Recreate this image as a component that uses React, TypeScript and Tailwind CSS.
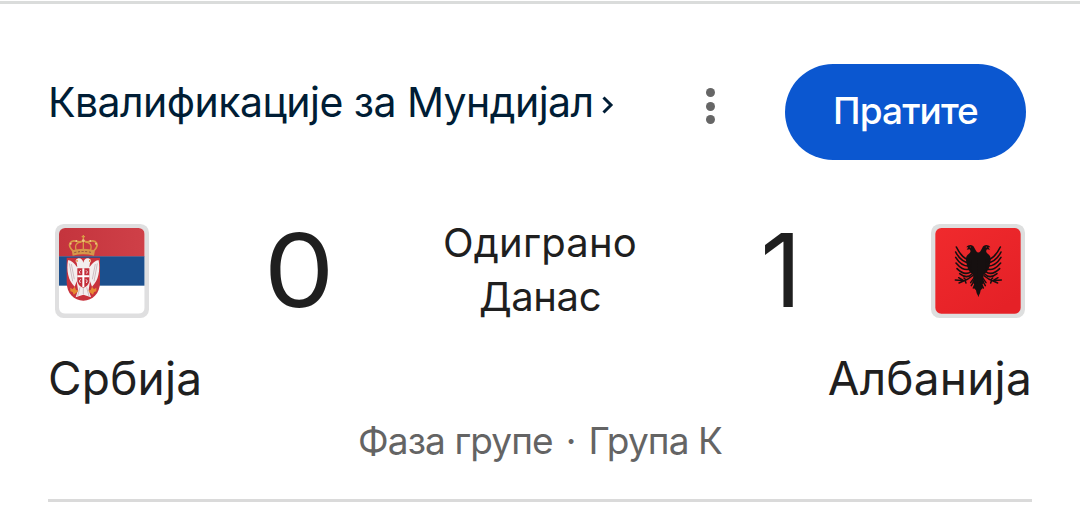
import type { ReactNode } from 'react'

const feathers = [
  'M152 152 C134 148 118 130 109 111',
  'M152 160 C130 158 116 144 107 126',
  'M152 168 C130 171 117 158 107 142',
  'M152 176 C132 184 120 173 108 159',
  'M154 184 C138 197 124 189 111 176',
  'M156 192 C144 205 130 200 119 191',
]

function SerbiaFlag() {
  return (
    <svg className="size-[94px] shrink-0" viewBox="45 42 282 282" aria-label="Србија">
      <defs>
        <clipPath id="serbia">
          <rect x="57" y="54" width="257" height="257" rx="18" />
        </clipPath>
        <linearGradient id="red" x1="0" y1="0" x2="1" y2="0">
          <stop offset="0" stopColor="#c4343d" />
          <stop offset="1" stopColor="#cf4048" />
        </linearGradient>
      </defs>
      <rect x="45" y="42" width="282" height="282" rx="26" fill="#dfdfe0" />
      <g clipPath="url(#serbia)">
        <rect x="57" y="54" width="257" height="257" fill="#fff" />
        <rect x="57" y="54" width="257" height="86" fill="url(#red)" />
        <rect x="57" y="139" width="257" height="88" fill="#1b4f8d" />
      </g>
      {/* shield */}
      <path d="M80 143 H180 V216 C180 250 158 272 130 272 C102 272 80 250 80 216 Z" fill="#c8323c" />
      {/* eagle */}
      <g fill="#f3eeee">
        <path d="M112 146 C121 142 128 148 130 158 C132 148 139 142 148 146 C154 149 155 154 150 158 L148 172 C158 158 170 148 176 151 C181 180 176 212 156 230 L150 214 L146 240 L153 262 L130 254 L107 262 L114 240 L110 214 L104 230 C84 212 79 180 84 151 C90 148 102 158 112 172 L110 158 C105 154 106 149 112 146 Z" />
      </g>
      <g stroke="#b9a3ab" strokeWidth="2" fill="none">
        <path d="M88 160 L98 214 M94 162 L103 208 M172 160 L162 214 M166 162 L157 208" />
        <path d="M120 232 L113 258 M130 232 V252 M140 232 L147 258" />
      </g>
      <path d="M112 175 H148 V214 Q146 228 130 234 Q114 228 112 214 Z" fill="#c42e3a" />
      <path d="M127 175 H133 V232 H127 Z M112 196 H148 V202 H112 Z" fill="#fff" />
      <g fill="none" stroke="#f3e4e4" strokeWidth="3">
        <path d="M122 181 Q115 184 120 191 M138 181 Q145 184 140 191 M122 208 Q115 212 121 219 M138 208 Q145 212 139 219" />
      </g>
      <g fill="#e58a32">
        <path d="M91 233 L98 238 L104 230 L108 240 L116 242 L107 250 L101 254 L98 246 L91 244 Z" />
        <path d="M169 233 L162 238 L156 230 L152 240 L144 242 L153 250 L159 254 L162 246 L169 244 Z" />
        <path d="M113 149 L106 153 L113 156 Z M147 149 L154 153 L147 156 Z" />
      </g>
      {/* crown */}
      <g fill="none" stroke="#d99a45" strokeWidth="5">
        <path d="M98 122 C80 104 92 88 110 94 C120 97 126 94 130 91 C134 94 140 97 150 94 C168 88 180 104 162 122" />
        <path d="M109 122 C102 104 112 97 124 96 M151 122 C158 104 148 97 136 96 M130 92 V120" strokeWidth="4" />
        <path d="M130 75 V90 M125 80 H135" strokeWidth="4" />
      </g>
      <path d="M95 121 Q130 112 165 121 L162 137 Q130 129 98 137 Z" fill="#d6974b" />
      <path d="M103 128 Q130 121 157 128" fill="none" stroke="#8f4c3e" strokeWidth="3" strokeDasharray="6 5" />
      <g fill="#edc383">
        <circle cx="92" cy="101" r="3" />
        <circle cx="109" cy="93" r="3" />
        <circle cx="151" cy="93" r="3" />
        <circle cx="168" cy="101" r="3" />
        <circle cx="130" cy="92" r="4" />
      </g>
    </svg>
  )
}

// One half of the eagle, the other is the same path mirrored at x = 175
function EagleHalf() {
  return (
    <g>
      <path
        d="M176 128 C170 127 167 121 163 113 C159 103 145 103 139 112 L145 112 L140 119 L149 118 C154 124 151 129 145 133 C137 138 136 150 141 166 C144 180 151 188 159 194 L161 208 L157 216 L164 224 L161 233 L168 241 L170 250 L176 261 Z"
        fill="#161010"
      />
      <g fill="none" stroke="#161010" strokeWidth="4.8" strokeLinecap="round">
        {feathers.map((d) => (
          <path key={d} d={d} />
        ))}
      </g>
      <g fill="none" stroke="#161010" strokeWidth="4.5" strokeLinecap="round" strokeLinejoin="round">
        <path d="M158 197 L144 207 L134 212 L106 210 M134 212 L117 219 M130 211 L116 203 M137 209 L132 204 M135 211 L138 219" />
        <path d="M163 202 L152 218 M165 208 L154 227 M168 216 L160 234" />
      </g>
      <circle cx="151" cy="111" r="1.8" fill="#e5252a" />
    </g>
  )
}

function AlbaniaFlag() {
  return (
    <svg className="size-[94px] shrink-0" viewBox="33 42 282 282" aria-label="Албанија">
      <defs>
        <linearGradient id="albania" x1="0" y1="0" x2="0.7" y2="1">
          <stop offset="0" stopColor="#f02a2d" />
          <stop offset="1" stopColor="#e52127" />
        </linearGradient>
      </defs>
      <rect x="33" y="42" width="282" height="282" rx="26" fill="#dedfdf" />
      <rect x="46" y="54" width="256" height="257" rx="18" fill="url(#albania)" />
      <EagleHalf />
      <g transform="translate(350 0) scale(-1 1)">
        <EagleHalf />
      </g>
    </svg>
  )
}

function Score({ children }: { children: ReactNode }) {
  return <span className="-mt-0.5 text-center text-[102px] leading-[94px]">{children}</span>
}

export default function App() {
  return (
    <div
      lang="sr"
      className="flex h-[507px] w-[1080px] flex-col overflow-hidden bg-white pt-px font-['Inter','Open_Sans',sans-serif] text-[#1f1f1f]"
    >
      <div className="h-[3px] shrink-0 bg-[#dadcdb]" />

      {/* Header */}
      <header className="mt-[60px] flex h-24 shrink-0 items-center pr-[54px] pl-12">
        <a className="-mt-5 flex items-center whitespace-nowrap text-[#001d35]">
          <span className="text-[41px] leading-[48px] tracking-[-0.55px]">Квалификације за Мундијал</span>
          <svg className="mt-1.5 ml-2 h-[20px] w-[12px]" viewBox="0 0 12 20" fill="none" stroke="currentColor" strokeWidth="3">
            <path d="M1.5 2.5 L9 10 L1.5 17.5" />
          </svg>
        </a>
        <div className="-mt-3 mr-[70.5px] ml-auto flex flex-col gap-[4.5px]">
          <i className="size-[9px] rounded-full bg-[#666]" />
          <i className="size-[9px] rounded-full bg-[#666]" />
          <i className="size-[9px] rounded-full bg-[#666]" />
        </div>
        <button className="h-24 w-[241px] rounded-full bg-[#0b57d0] pb-[3px] text-[37px] font-medium tracking-[-0.9px] text-white">
          Пратите
        </button>
      </header>

      {/* Score */}
      <div className="mt-16 grid h-[94px] shrink-0 grid-cols-[94px_300px_182px_300px_94px] grid-rows-[94px] items-center pl-[55px]">
        <SerbiaFlag />
        <Score>
          <span className="inline-block scale-x-[1.1]">0</span>
        </Score>
        <div className="-mx-10 -mt-0.5 text-center text-[40px] leading-[54px]">
          <p className="tracking-[0.2px]">Одиграно</p>
          <p className="tracking-[-0.4px]">Данас</p>
        </div>
        <Score>1</Score>
        <AlbaniaFlag />
      </div>

      <div className="mt-8 flex h-14 shrink-0 items-center justify-between px-12 text-[46px] leading-[56px] tracking-[0.2px]">
        <span>Србија</span>
        <span>Албанија</span>
      </div>

      <p className="mt-[13px] flex shrink-0 justify-center text-[37px] leading-[44px] tracking-[-0.9px] text-[#646464]">
        <span>Фаза групе</span>
        <span className="mx-[13px]">·</span>
        <span>Група К</span>
      </p>

      <div className="mx-12 mt-9 h-[3px] shrink-0 bg-[#dadada]" />
    </div>
  )
}
